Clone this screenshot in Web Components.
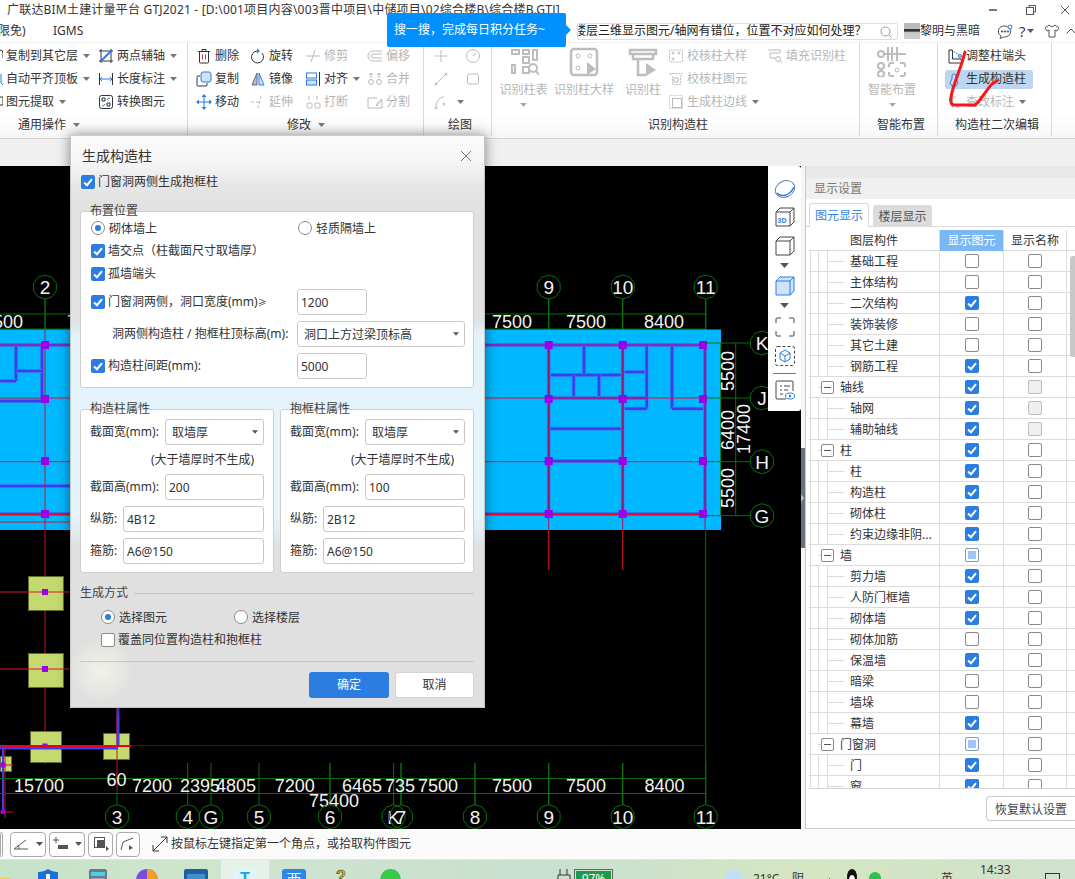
<!DOCTYPE html>
<html lang="zh">
<head>
<meta charset="utf-8">
<title>GTJ2021</title>
<style>
    html, body { margin: 0; padding: 0; background: #f0f0f0; }
    body {
        width: 1075px;
        height: 879px;
        overflow: hidden;
        position: relative;
        font: 12px/16px "Noto Sans", "Noto Sans CJK SC", sans-serif;
        color: #333;
    }
    #shell { display: flex; flex-direction: column; height: 879px; }
    #work { display: flex; height: 663px; }
</style>
</head>
<body>
<div id="shell">
    <title-bar></title-bar>
    <menu-bar></menu-bar>
    <rb-ribbon>
        <rb-group w="188" lpad="18" label="通用操作" caret>
            <rb-col w="111" left="-13">
                <rb-tool icon="frag1" caret>复制到其它层</rb-tool>
                <rb-tool icon="frag2" caret>自动平齐顶板</rb-tool>
                <rb-tool icon="frag3" caret>图元提取</rb-tool>
            </rb-col>
            <rb-col w="90">
                <rb-tool icon="axis" caret>两点辅轴</rb-tool>
                <rb-tool icon="dim" caret>长度标注</rb-tool>
                <rb-tool icon="convert">转换图元</rb-tool>
            </rb-col>
        </rb-group>
        <rb-group w="236" lpad="99" label="修改" caret>
            <rb-col w="54" left="8">
                <rb-tool icon="trash">删除</rb-tool>
                <rb-tool icon="copy">复制</rb-tool>
                <rb-tool icon="move">移动</rb-tool>
            </rb-col>
            <rb-col w="55">
                <rb-tool icon="rotate">旋转</rb-tool>
                <rb-tool icon="mirror">镜像</rb-tool>
                <rb-tool icon="extend" off>延伸</rb-tool>
            </rb-col>
            <rb-col w="62">
                <rb-tool icon="trim" off>修剪</rb-tool>
                <rb-tool icon="align" caret>对齐</rb-tool>
                <rb-tool icon="breakp" off>打断</rb-tool>
            </rb-col>
            <rb-col w="50">
                <rb-tool icon="offset" off>偏移</rb-tool>
                <rb-tool icon="merge" off>合并</rb-tool>
                <rb-tool icon="split" off>分割</rb-tool>
            </rb-col>
        </rb-group>
        <rb-group w="68" lpad="24" label="绘图">
            <rb-col w="32" left="9">
                <rb-tool icon="point" off></rb-tool>
                <rb-tool icon="line" off></rb-tool>
                <rb-tool icon="arc" off caret></rb-tool>
            </rb-col>
            <rb-col w="20">
                <rb-tool icon="circle" off></rb-tool>
                <rb-tool icon="rect" off></rb-tool>
            </rb-col>
        </rb-group>
        <rb-group w="368" lpad="156" label="识别构造柱">
            <rb-big w="53" left="5" icon="bigTable" caret>识别柱表</rb-big>
            <rb-big w="68" icon="bigSample">识别柱大样</rb-big>
            <rb-big w="50" icon="bigColumn">识别柱</rb-big>
            <rb-col w="99">
                <rb-tool icon="chk1" off>校核柱大样</rb-tool>
                <rb-tool icon="chk2" off>校核柱图元</rb-tool>
                <rb-tool icon="edge" off caret>生成柱边线</rb-tool>
            </rb-col>
            <rb-col w="80">
                <rb-tool icon="fill" off>填充识别柱</rb-tool>
            </rb-col>
        </rb-group>
        <rb-group w="78" lpad="17" label="智能布置">
            <rb-big w="48" left="8" icon="bigSmart" caret>智能布置</rb-big>
        </rb-group>
        <rb-group w="114" lpad="17" label="构造柱二次编辑">
            <rb-col w="100" left="9">
                <rb-tool icon="adjust">调整柱端头</rb-tool>
                <rb-tool icon="gen" active>生成构造柱</rb-tool>
                <rb-tool icon="note" off caret>查改标注</rb-tool>
            </rb-col>
        </rb-group>
    </rb-ribbon>
    <tab-strip></tab-strip>
    <div id="work">
        <cad-view></cad-view>
        <split-bar></split-bar>
        <display-panel></display-panel>
    </div>
    <status-bar></status-bar>
    <task-bar></task-bar>
</div>
<search-tip></search-tip>
<ink-mark></ink-mark>
<view-toolbar></view-toolbar>
<cons-dialog></cons-dialog>

<script>
const BLUE = '#2b7de1';
const svg = (w, h, body, vb) => `<svg xmlns="http://www.w3.org/2000/svg" width="${w}" height="${h}" viewBox="${vb || `0 0 ${w} ${h}`}" fill="none" stroke="currentColor" stroke-width="1">${body}</svg>`;

// 16 unit ribbon icons, big ones are 30
const ICONS = {
    frag1: `<path d="M13 2a3 3 0 0 1 3 3v5" stroke="#333"/>`,
    frag2: `<path d="M14 3v9l2 2" stroke="${BLUE}"/>`,
    frag3: `<path d="M13 3h3v8h-3" stroke="#333"/>`,
    axis: `<path d="M3 1v14M1 13h14M13 1v14M1 3h14" stroke="#333"/><path d="M3 13L13 3" stroke="${BLUE}" stroke-width="2"/>`,
    dim: `<path d="M1.500 2v12M14.500 2v12" stroke="#333"/><path d="M2 8h12M4 6L2 8l2 2M12 6l2 2-2 2" stroke="${BLUE}"/>`,
    convert: `<rect x="1.500" y="1.500" width="13" height="13" rx="2" stroke="#333"/><path d="M4 4h3v3H4zM9 9h3v3H9z" stroke="#333"/><path d="M9 6a3 3 0 0 1 3-2M7 10a3 3 0 0 1-3 2" stroke="${BLUE}"/>`,
    trash: `<path d="M2 3.500h12M6 3.500V1.500h4v2M3.500 3.500v10.500a1 1 0 0 0 1 1h7a1 1 0 0 0 1-1V3.500" stroke="#333"/><path d="M6.500 6.500v5M9.500 6.500v5" stroke="#d92b2b"/>`,
    rotate: `<path d="M7 3a6 6 0 1 0 5 2" stroke="#333"/><path d="M7 0.500l3 2.500-3 2.500z" fill="${BLUE}" stroke="none"/>`,
    copy: `<rect x="5" y="1" width="10" height="10" rx="2" fill="#cfe2fa" stroke="${BLUE}"/><path d="M4 5H2a1 1 0 0 0-1 1v8a1 1 0 0 0 1 1h8a1 1 0 0 0 1-1v-2" stroke="#333"/>`,
    mirror: `<path d="M7 2L2 14h5z" fill="#aebfd6" stroke="#667"/><path d="M9 2l5 12H9z" fill="#cfe2fa" stroke="${BLUE}"/>`,
    align: `<rect x="1.500" y="2" width="10" height="5" fill="#fff" stroke="${BLUE}"/><rect x="1.500" y="9" width="10" height="5" fill="#cfe2fa" stroke="${BLUE}"/><path d="M14.500 1v14" stroke="#333"/>`,
    move: `<path d="M8 1v14M1 8h14" stroke="${BLUE}"/><path d="M8 0l2.500 3h-5zM8 16l2.500-3h-5zM0 8l3-2.500v5zM16 8l-3-2.500v5z" fill="${BLUE}" stroke="none"/>`,
    trim: `<path d="M1 8h14M10 2L6 14"/>`,
    extend: `<path d="M1 8h3M6 8h3M11 2L8 14" stroke-dasharray="3 2"/>`,
    offset: `<path d="M15 3H6a5 5 0 0 0 0 10h9M15 6H6a2 2 0 0 0 0 4h9"/>`,
    merge: `<circle cx="4" cy="11" r="2.500"/><circle cx="12" cy="11" r="2.500"/><path d="M4 3v4M12 3v4M2 4l2-2 2 2M10 4l2-2 2 2"/>`,
    breakp: `<rect x="2" y="9" width="5" height="5" rx="1"/><rect x="10" y="9" width="5" height="5" rx="1"/><path d="M4 2v4M12 2v4"/>`,
    split: `<path d="M1 4h9M1 4v10h14V7M9 11l5-6 1 1-5 6z"/>`,
    point: `<path d="M8 2v4M8 10v4M2 8h4M10 8h4"/><circle cx="8" cy="8" r="1" fill="currentColor"/>`,
    circle: `<circle cx="8" cy="8" r="6.500"/><path d="M8 8l3-3"/>`,
    line: `<path d="M3 13L13 3"/><circle cx="3" cy="13" r="1"/><circle cx="13" cy="3" r="1"/>`,
    rect: `<rect x="2.500" y="3" width="11" height="10" rx="2"/>`,
    arc: `<path d="M3 14C3 8 6 3 11 3"/><circle cx="3" cy="14" r="1"/><circle cx="11" cy="10" r="1"/>`,
    chk1: `<rect x="1.500" y="2" width="13" height="12" rx="1" stroke-dasharray="2 1"/><circle cx="5" cy="5" r="1"/><circle cx="11" cy="5" r="1"/><circle cx="5" cy="11" r="1"/>`,
    chk2: `<path d="M1.500 2.500h13l-2 3v8h-8v-8z" stroke-dasharray="2 1"/><path d="M6 7h4v4H6z"/>`,
    edge: `<rect x="1.500" y="1.500" width="13" height="13" stroke-dasharray="1 1"/><rect x="4.500" y="4.500" width="9" height="9"/>`,
    fill: `<path d="M1 2h12v3H3v5h5"/><circle cx="11" cy="11" r="2.500"/><path d="M13 13l2 2"/>`,
    adjust: `<path d="M2 15V2h3.500v9H14l1 4z" stroke="#333"/><path d="M4 2l8 5" stroke="${BLUE}" stroke-dasharray="2 1"/><circle cx="13" cy="8" r="1.500" fill="#cfe2fa" stroke="${BLUE}"/>`,
    gen: `<path d="M5 5a2 2 0 1 1 4 0v3l2 4-2 3H5l-2-3 2-4z" fill="#cfe2fa" stroke="${BLUE}"/>`,
    note: `<path d="M2 3h7M5.500 3v11"/><circle cx="11" cy="12" r="1.500"/>`
};
const BIG = {
    bigTable: `<path d="M3 3h7v4H3zM14 3h6v4h-6zM24 3h4v10h-4zM14 10h6v6h-6zM3 18h3v8H3zM14 20h6v6h-6z" stroke-width="2"/><circle cx="24" cy="21" r="4" stroke-width="2"/><path d="M27 24l3 4" stroke-width="2"/>`,
    bigSample: `<rect x="2" y="2" width="26" height="26" rx="3" stroke-width="2.500"/><circle cx="9" cy="9" r="2"/><circle cx="21" cy="9" r="2"/><circle cx="9" cy="21" r="2"/><path d="M18 15l9 7-9 6z" fill="currentColor" stroke="none"/>`,
    bigColumn: `<path d="M2 3h26v4H2zM5 7v5h20V7M10 12v16h8" stroke-width="2.500"/><path d="M18 16l10 7-10 6z" fill="currentColor" stroke="none"/>`,
    bigSmart: `<path d="M0 7h29M11 0v14M20 0v14M0 18h8M15 0v14" stroke-width="2"/><circle cx="4" cy="7" r="3" fill="#fff" stroke-width="2"/><circle cx="4" cy="19" r="3" fill="#fff" stroke-width="2"/><circle cx="4" cy="27" r="3" fill="#fff" stroke-width="2"/><path d="M14 16h3M23 16h3a2 2 0 0 1 2 2v2M28 25v2a2 2 0 0 1-2 2h-3M17 29h-3a2 2 0 0 1-2-2v-2M12 20v-2a2 2 0 0 1 2-2" stroke-width="2"/><circle cx="20" cy="23" r="2"/>`
};

const CARET = `<svg width="7" height="4" viewBox="0 0 7 4"><path d="M0 0h7L3.500 4z" fill="currentColor"/></svg>`;
const TICK = `<svg width="14" height="14" viewBox="0 0 14 14"><path d="M3 7.500l3 2.700 5-6" fill="none" stroke="#fff" stroke-width="2"/></svg>`;

class TitleBar extends HTMLElement {
    connectedCallback() {
        this.attachShadow({ mode: 'open' }).innerHTML = `
            <style>
                :host { display: flex; align-items: center; height: 21px; background: #fff; padding-left: 7px; position: relative; white-space: nowrap; }
                .t { flex: 1; letter-spacing: .2px; }
                .w { display: flex; align-items: center; color: #555; }
            </style>
            <span class="t">广联达BIM土建计量平台 GTJ2021 - [D:\\001项目内容\\003晋中项目\\中储项目\\02综合楼B\\综合楼B.GTJ]</span>
            <span class="w">
                ${svg(8, 3, '<rect width="8" height="2" fill="#777" stroke="none"/>')}
                <span style="width:29px"></span>
                ${svg(10, 10, '<rect x="0.500" y="2.500" width="7" height="7"/><path d="M3 2V0.500h6.500V7H8"/>')}
                <span style="width:24px"></span>
                ${svg(10, 10, '<path d="M1 1l8 8M9 1l-8 8"/>')}
                <span style="width:5px"></span>
            </span>`;
    }
}

class MenuBar extends HTMLElement {
    connectedCallback() {
        this.attachShadow({ mode: 'open' }).innerHTML = `
            <style>
                :host { display: flex; align-items: center; height: 21px; background: #fff; white-space: nowrap; overflow: hidden; }
                .m { margin-left: -2px; width: 55px; flex: none; }
                .s { margin-left: 492px; width: 319px; height: 15px; border: 1px solid #ddd; border-radius: 2px; box-sizing: content-box; display: flex; align-items: center; flex: none; position: relative; overflow: hidden; }
                .s span { margin-left: -4px; color: #222; }
                .s svg { position: absolute; right: 5px; top: 2px; color: #999; background: #fff; }
                .pic { width: 16px; height: 16px; margin-left: 6px; flex: none; background: linear-gradient(#bbb 0 35%, #333 40% 50%, #ccc 60%); }
                .i { display: flex; align-items: center; color: #555; }
            </style>
            <span class="m">限免)</span>
            <span style="width:32px;flex:none">IGMS</span>
            <div class="s"><span>楼层三维显示图元/轴网有错位，位置不对应如何处理？</span>${svg(12, 12, '<circle cx="5.500" cy="5.500" r="4.500"/><path d="M9 9l2.500 2.500"/>')}</div>
            <div class="pic"></div>
            <span style="width:60px;flex:none">黎明与黑暗</span>
            <div class="i">
                <span style="width:17px"></span>
                ${svg(16, 15, `<path d="M8 2a6.500 5.500 0 0 0-4 10l-1 2.500 3.500-1.500A6.500 5.500 0 1 0 8 2z"/><circle cx="5" cy="7.500" r=".7" fill="currentColor"/><circle cx="8" cy="7.500" r=".7" fill="currentColor"/><circle cx="11" cy="7.500" r=".7" fill="currentColor"/><circle cx="13" cy="3" r="2" fill="#fff" stroke="${BLUE}"/>`)}
                <span style="width:6px"></span>
                <span style="font-size:15px;color:#444">?</span>
                <span style="width:1px"></span>
                ${CARET}
                <span style="width:10px"></span>
                ${svg(16, 14, '<path d="M5 1L1 4l2 3 2-1v7h6V6l2 1 2-3-4-3c-1 2-5 2-6 0z"/>')}
                <span style="width:6px"></span>
                ${svg(10, 6, '<path d="M0.500 5.500L5 1l4.500 4.500"/>')}
            </div>`;
    }
}

class RbRibbon extends HTMLElement {
    connectedCallback() {
        this.attachShadow({ mode: 'open' }).innerHTML = `
            <style>
                :host { display: flex; height: 96px; background: linear-gradient(#fff 76%, #f6f6f6); border-bottom: 1px solid #d4d4d4; overflow: hidden; border-top: 1px solid #f0f0f0; box-sizing: content-box; }
            </style>
            <slot></slot>`;
    }
}

class RbGroup extends HTMLElement {
    connectedCallback() {
        const w = this.getAttribute('w');
        this.attachShadow({ mode: 'open' }).innerHTML = `
            <style>
                :host { display: flex; flex-direction: column; flex: none; width: ${w}px; box-sizing: border-box; border-right: 1px solid #d8d8d8; height: 93px; }
                .body { display: flex; height: 72px; flex: none; padding-top: 2px; box-sizing: border-box; }
                .lab { display: flex; align-items: center; gap: 7px; height: 21px; flex: none; padding-left: ${this.getAttribute('lpad')}px; white-space: nowrap; color: #333; }
                .lab svg { color: #777; }
            </style>
            <div class="body"><slot></slot></div>
            <div class="lab">${this.getAttribute('label')}${this.hasAttribute('caret') ? CARET : ''}</div>`;
    }
}

class RbCol extends HTMLElement {
    connectedCallback() {
        const left = this.getAttribute('left') || 0;
        this.attachShadow({ mode: 'open' }).innerHTML = `
            <style>
                :host { display: flex; flex-direction: column; flex: none; width: ${this.getAttribute('w')}px; margin-left: ${left}px; }
            </style>
            <slot></slot>`;
    }
}

class RbTool extends HTMLElement {
    connectedCallback() {
        const off = this.hasAttribute('off');
        const active = this.hasAttribute('active');
        const caret = this.hasAttribute('caret');
        this.attachShadow({ mode: 'open' }).innerHTML = `
            <style>
                :host { display: flex; align-items: center; height: 23px; white-space: nowrap; color: ${off ? '#b6b6b6' : '#333'}; }
                .ic { width: 16px; height: 16px; margin-right: 3px; flex: none; color: #bbb; }
                .ca { margin-left: 5px; color: #777; display: flex; }
                .hl { display: flex; align-items: center; height: 19px; width: 88px; margin-left: -2px; padding-left: 2px; box-sizing: border-box; border-radius: 3px; background: #bcd6f2; }
                .row { display: flex; align-items: center; }
            </style>
            <div class="${active ? 'hl' : 'row'}">
                <span class="ic">${svg(16, 16, ICONS[this.getAttribute('icon')] || '')}</span>
                <span><slot></slot></span>
                ${caret ? `<span class="ca">${CARET}</span>` : ''}
            </div>`;
    }
}

class RbBig extends HTMLElement {
    connectedCallback() {
        const left = this.getAttribute('left') || 0;
        this.attachShadow({ mode: 'open' }).innerHTML = `
            <style>
                :host { display: flex; flex-direction: column; align-items: center; flex: none; width: ${this.getAttribute('w')}px; margin-left: ${left}px; color: #b6b6b6; white-space: nowrap; padding-top: 2px; }
                .ic { height: 30px; color: #bdbdbd; }
                .tx { margin-top: 5px; line-height: 16px; }
                .ca { margin-top: 5px; display: flex; color: #aaa; }
            </style>
            <div class="ic">${svg(30, 30, BIG[this.getAttribute('icon')] || '')}</div>
            <div class="tx"><slot></slot></div>
            ${this.hasAttribute('caret') ? `<div class="ca">${CARET}</div>` : ''}`;
    }
}

class TabStrip extends HTMLElement {
    connectedCallback() {
        this.attachShadow({ mode: 'open' }).innerHTML = `<style>:host { display: block; height: 27px; background: #f0f0f0; }</style>`;
    }
}

class SearchTip extends HTMLElement {
    connectedCallback() {
        this.attachShadow({ mode: 'open' }).innerHTML = `
            <style>
                :host { position: absolute; left: 387px; top: 13px; width: 179px; height: 34px; background: #0091ff; color: #fff; display: flex; align-items: center; padding-left: 7px; box-sizing: border-box; border-radius: 2px; white-space: nowrap; }
                i { position: absolute; right: -5px; top: 12px; border-left: 5px solid #0091ff; border-top: 5px solid transparent; border-bottom: 5px solid transparent; }
            </style>
            搜一搜，完成每日积分任务~<i></i>`;
    }
}

class InkMark extends HTMLElement {
    connectedCallback() {
        this.attachShadow({ mode: 'open' }).innerHTML = `
            <style>:host { position: absolute; left: 945px; top: 48px; width: 56px; height: 62px; pointer-events: none; }</style>
            <svg width="56" height="62" viewBox="945 48 56 62" fill="none"><path d="M965 52C963 60 961 66 958 74C955 82 952 90 951 97C950 101 951 105 954 105L975 105C980 102 986 90 992 84L997 81" stroke="#f5161c" stroke-width="3" stroke-linecap="round" stroke-linejoin="round"/></svg>`;
    }
}

// drawing area, coordinates below are page coordinates
class CadView extends HTMLElement {
    connectedCallback() {
        const G = '#0a6e0a', R = '#e0102e', B = '#3f3cf0', P = '#9a00ee';
        const line = (x1, y1, x2, y2, c, w = 1) => `<line x1="${x1}" y1="${y1}" x2="${x2}" y2="${y2}" stroke="${c}" stroke-width="${w}"/>`;
        const txt = (x, y, s, size = 18, rot) => `<text x="${x}" y="${y}" font-size="${size}" fill="#f2f2f2" text-anchor="middle"${rot ? ` transform="rotate(-90 ${x} ${y})"` : ''}>${s}</text>`;
        const bubble = (x, y, s) => {
            let pts = [];
            for (let i = 0; i < 10; i++) {
                const a = Math.PI * 2 * i / 10 + Math.PI / 10;
                pts.push((x + 12 * Math.cos(a)).toFixed(1) + ',' + (y + 12 * Math.sin(a)).toFixed(1));
            }
            return `<polygon points="${pts.join(' ')}" fill="none" stroke="${G}"/>` + txt(x, y + 7, s, 19);
        };
        const sq = (x, y, s = 8) => `<rect x="${x - s / 2}" y="${y - s / 2}" width="${s}" height="${s}" fill="${P}"/>`;
        const wall = (x1, y1, x2, y2) => line(x1, y1, x2, y2, '#2a8cf8', 4) + line(x1, y1, x2, y2, B, 2.500);
        const pad = (x, y, w, h) => `<rect x="${x + .5}" y="${y + .5}" width="${w}" height="${h}" fill="#c4da6e" stroke="#5f6f30"/>`;

        let s = '';
        s += line(0, 314, 706, 314, G) + line(0, 329, 706, 329, G);
        [[45, 299, 330], [548.700, 299, 330], [622.700, 299, 330], [705.700, 299, 330]].forEach(a => s += line(a[0], a[1], a[0], a[2], G, 1.500));
        s += `<rect x="0" y="329.500" width="721" height="200.500" fill="#00b8ff"/>`;

        // walls
        [[0, 345, 705, 345], [0, 401, 45, 401], [0, 486, 70, 486], [0, 514, 705, 514], [16, 345, 16, 381], [0, 381, 16, 381], [42, 345, 42, 400], [16, 371, 42, 371],
         [549, 375, 622, 375], [584, 345, 584, 375], [573.700, 375, 573.700, 398], [599, 375, 599, 398], [549, 398, 622, 398], [622, 372, 646.700, 372],
         [646.700, 345, 646.700, 408.700], [622, 408.700, 646.700, 408.700], [672, 345, 672, 408.700], [672, 408.700, 705, 408.700], [549, 428.700, 622, 428.700],
         [549, 461, 622, 461], [548.700, 345, 548.700, 514], [622.700, 345, 622.700, 514], [705, 345, 705, 514], [622, 398, 646, 398]].forEach(a => s += wall(...a));

        // axis lines in red
        s += line(0, 345, 705, 345, '#c0206a') + line(0, 398, 705, 398, R) + line(0, 461.700, 705, 461.700, R) + line(0, 514.500, 705, 514.500, R, 1.500) + line(0, 522, 70, 522, R);
        s += line(45, 329, 45, 764, '#c81228') + line(548.700, 345, 548.700, 570, '#a8184c') + line(622.700, 345, 622.700, 570, '#a8184c') + line(705, 345, 705, 530, '#a8184c');
        s += line(548.700, 530, 548.700, 570, '#b01010') + line(622.700, 530, 622.700, 570, '#b01010') + line(705.700, 530, 705.700, 805, G);

        [45, 548.700, 622.700, 703].forEach(x => [345, 399, 461, 514].forEach(y => s += sq(x, y)));

        s += pad(28, 576, 35, 34) + pad(28, 653, 35, 34) + pad(30, 731, 31, 31) + pad(103, 733, 26, 26) + pad(0, 756, 11, 15);
        s += line(0, 592, 300, 592, R) + line(0, 669, 300, 669, R);
        s += sq(45, 592, 6) + sq(45, 669, 6) + sq(45, 746, 5);

        s += line(118, 708, 118, 746, B, 3) + line(117, 700, 117, 790, '#c81228');
        s += line(0, 748, 118, 748, B, 3) + line(0, 746, 131, 746, '#f00010', 2) + line(131, 745.500, 706, 745.500, '#800000');
        s += line(3, 746, 3, 812, B, 2) + line(5, 746, 5, 818, '#c81228') + line(0, 812, 13, 812, '#c81228') + line(0, 765, 13, 765, '#f00010') + sq(3, 765, 5) + sq(3, 812, 4);

        // dimension lines
        s += line(0, 778.500, 706, 778.500, G) + line(0, 793.500, 706, 793.500, G);
        [187.700, 211, 259, 393.600, 401, 475, 548.700, 622.700, 705.700].forEach(x => s += line(x, 763, x, 805, G, x === 401 || x === 475 || x === 548.700 || x === 622.700 ? 1.500 : 1));
        s += line(330, 763, 330, 805, G, 1.500) + line(117, 790, 117, 805, G);
        [[39, '15700'], [152, '7200'], [200, '2395'], [236, '4805'], [294.700, '7200'], [362, '6465'], [400, '735'], [438, '7500'], [512, '7500'], [586, '7500'], [664.600, '8400']].forEach(a => s += txt(a[0], 792, a[1]));
        s += txt(116.600, 786, '60') + txt(334, 807, '75400');
        [[117, '3'], [187.700, '4'], [211, 'G'], [259, '5'], [330, '6'], [393.600, 'K'], [401, '7'], [475, '8'], [548.700, '9'], [622.700, '10'], [705.700, '11']].forEach(a => s += bubble(a[0], 816.700, a[1]));

        // top axis
        [[45, '2'], [548.700, '9'], [622.700, '10'], [705.700, '11']].forEach(a => s += bubble(a[0], 287, a[1]));
        [[8, '500'], [72, '7'], [512, '7500'], [586, '7500'], [664, '8400']].forEach(a => s += txt(a[0], 328, a[1]));

        // right axis
        [[343, 'K'], [398, 'J'], [461.700, 'H'], [515.700, 'G']].forEach(a => s += line(705, a[0], 750, a[0], G) + bubble(762, a[0], a[1]));
        s += line(720.700, 343, 720.700, 516, G) + line(735.700, 343, 735.700, 516, G);
        s += txt(734, 371, '5500', 18, true) + txt(734, 430, '6400', 18, true) + txt(734, 488, '5500', 18, true) + txt(750, 429, '17400', 18, true);

        this.attachShadow({ mode: 'open' }).innerHTML = `
            <style>
                :host { display: block; flex: none; width: 801px; height: 663px; background: #000; overflow: hidden; }
                svg { display: block; font-family: "Liberation Sans", sans-serif; }
            </style>
            <svg width="801" height="663" viewBox="0 166 801 663">${s}</svg>`;
    }
}

class SplitBar extends HTMLElement {
    connectedCallback() {
        this.attachShadow({ mode: 'open' }).innerHTML = `
            <style>
                :host { display: flex; flex-direction: column; flex: none; width: 4px; background: #f6f6f6; }
                .top { height: 282px; }
                .g { height: 100px; background: #6c747c; color: #ddd; display: flex; align-items: center; }
                i { border-left: 3px solid #c8c8c8; border-top: 4px solid transparent; border-bottom: 4px solid transparent; }
            </style>
            <div class="top"></div><div class="g"><i></i></div>`;
    }
}

class ViewToolbar extends HTMLElement {
    connectedCallback() {
        const c = '#444';
        const cube = (fill, stroke) => svg(20, 20, `<path d="M1 5l4-4h14v14l-4 4H1z" fill="${fill}" stroke="${stroke}"/><path d="M1 5h14v14M15 5l4-4" stroke="${stroke}"/>`);
        this.attachShadow({ mode: 'open' }).innerHTML = `
            <style>
                :host { position: absolute; left: 768px; top: 166px; width: 33px; height: 245px; box-sizing: border-box; background: #fff; border-radius: 0 3px 3px 0; display: flex; flex-direction: column; align-items: center; color: ${c}; padding-top: 12px; }
                .ca { color: #555; display: flex; height: 4px; }
                .ca svg { width: 9px; height: 5px; }
                hr { width: 23px; margin: 0; border: 0; border-top: 1px solid #777; }
                div.i { display: flex; flex: none; position: relative; }
                .d3 { position: absolute; left: 3px; bottom: 2px; font: 700 7px/8px "Liberation Sans", sans-serif; color: ${BLUE}; }
            </style>
            <div class="i">${svg(22, 22, `<ellipse cx="11" cy="11" rx="10" ry="8" transform="rotate(-25 11 11)" stroke="#5a7fb8"/><path d="M3 15c4 4 12 4 17-6" stroke="${BLUE}" stroke-width="1.500"/>`)}</div>
            <div class="i" style="margin-top:7px">${cube('#fff', c)}<span class="d3">3D</span></div>
            <div class="i" style="margin-top:9px">${cube('#fff', c)}</div>
            <div class="ca" style="margin-top:7px">${CARET}</div>
            <div class="i" style="margin-top:9px">${cube('#d0e3fb', BLUE)}</div>
            <div class="ca" style="margin-top:7px">${CARET}</div>
            <div class="i" style="margin-top:10px">${svg(20, 20, '<path d="M1 6V2a1 1 0 0 1 1-1h4M14 1h4a1 1 0 0 1 1 1v4M19 14v4a1 1 0 0 1-1 1h-4M6 19H2a1 1 0 0 1-1-1v-4"/>')}</div>
            <div class="i" style="margin-top:9px">${svg(20, 20, `<rect x="0.500" y="0.500" width="19" height="19" rx="2" stroke-dasharray="3 2"/><path d="M10 4l5 3v6l-5 3-5-3V7zM5 7l5 3 5-3M10 10v6" stroke="${BLUE}"/>`)}</div>
            <hr style="margin-top:7px">
            <div class="i" style="margin-top:6px">${svg(20, 20, `<path d="M18 11V2a1 1 0 0 0-1-1H2a1 1 0 0 0-1 1v16a1 1 0 0 0 1 1h9"/><path d="M5 6h2M9 6h6M5 10h2M9 10h4M5 14h3"/><ellipse cx="15" cy="16" rx="4.500" ry="3" stroke="${BLUE}"/><circle cx="15" cy="16" r="1.200" fill="${BLUE}" stroke="none"/>`)}</div>`;
    }
}

class DlgCheck extends HTMLElement {
    connectedCallback() {
        const on = this.hasAttribute('on');
        this.attachShadow({ mode: 'open' }).innerHTML = `
            <style>
                :host { display: flex; align-items: center; gap: 3px; height: 14px; white-space: nowrap; }
                .b { width: 14px; height: 14px; box-sizing: border-box; border-radius: 2px; flex: none; background: ${on ? BLUE : '#fff'}; ${on ? '' : 'border: 1px solid #8a8a8a;'} }
                .b svg { display: block; }
            </style>
            <span class="b">${on ? TICK : ''}</span><span><slot></slot></span>`;
    }
}

class DlgRadio extends HTMLElement {
    connectedCallback() {
        const on = this.hasAttribute('on');
        this.attachShadow({ mode: 'open' }).innerHTML = `
            <style>
                :host { display: flex; align-items: center; gap: 4px; height: 14px; white-space: nowrap; }
                .b { width: 14px; height: 14px; box-sizing: border-box; border-radius: 50%; flex: none; background: #fff; border: 1px solid #8a8a8a; display: flex; align-items: center; justify-content: center; }
                .b i { width: 6px; height: 6px; border-radius: 50%; background: ${on ? BLUE : 'transparent'}; }
                .t { padding-top: 1px; }
            </style>
            <span class="b"><i></i></span><span class="t"><slot></slot></span>`;
    }
}

class DlgField extends HTMLElement {
    connectedCallback() {
        const sel = this.hasAttribute('select');
        this.attachShadow({ mode: 'open' }).innerHTML = `
            <style>
                :host { display: flex; align-items: center; height: 26px; box-sizing: border-box; border: 1px solid #c8c8c8; border-radius: 3px; background: #fff; padding-left: ${sel ? 6 : 3}px; white-space: nowrap; color: #333; }
                span { flex: 1; padding-top: 1px; }
                svg { margin-right: 5px; color: #555; width: 6px; }
            </style>
            <span><slot></slot></span>${sel ? CARET : ''}`;
    }
}

class DlgBox extends HTMLElement {
    connectedCallback() {
        this.attachShadow({ mode: 'open' }).innerHTML = `
            <style>
                :host { display: block; position: relative; box-sizing: border-box; background: #fff; border: 1px solid #cfcfcf; border-radius: 3px; }
                .lg { position: absolute; left: 9px; top: -9px; white-space: nowrap; color: #444; }
            </style>
            <div class="lg">${this.getAttribute('legend')}</div><slot></slot>`;
    }
}

class ConsDialog extends HTMLElement {
    connectedCallback() {
        const props = (t, v1, v2, v3) => `
            <dlg-box class="prop" legend="${t}">
                <div class="fr"><span style="width:75px">截面宽(mm):</span><dlg-field select>取墙厚</dlg-field></div>
                <div class="note">(大于墙厚时不生成)</div>
                <div class="fr"><span style="width:75px">截面高(mm):</span><dlg-field>${v1}</dlg-field></div>
                <div class="fr g"><span style="width:33px">纵筋:</span><dlg-field>${v2}</dlg-field></div>
                <div class="fr g"><span style="width:33px">箍筋:</span><dlg-field>${v3}</dlg-field></div>
            </dlg-box>`;
        this.attachShadow({ mode: 'open' }).innerHTML = `
            <style>
                :host {
                    position: absolute; left: 70px; top: 135px; width: 415px; height: 573px; box-sizing: border-box;
                    padding: 0 10px 0 9px; color: #333; white-space: nowrap;
                    border: 1px solid #c4c4c4; border-top-color: #ccc;
                    box-shadow: 0 0 12px rgba(0,0,0,.45);
                    background:
                        radial-gradient(circle at 30px 534px, #f2f2e8 0, rgba(240,240,232,0) 32px),
                        linear-gradient(#fbfbfb 0, #f6f6f6 25px, #e6e6e6 50px, #e1e1e1 70px, #e1e1e1 185px, #e4f2fb 200px, #e4f3fc 380px, #e1e8ee 400px, #e0e0e0 410px);
                }
                .head { display: flex; align-items: center; justify-content: space-between; height: 39px; padding: 0 2px; }
                .head b { font-weight: 400; font-size: 14px; line-height: 20px; }
                .head svg { color: #777; }
                .pos { margin-top: 22px; height: 177px; padding: 9px 8px 0 10px; }
                .pos .r { display: grid; grid-template-columns: 206px 1fr; align-items: center; }
                .r14 { margin-top: 9px; }
                .r26 { margin-top: 6px; height: 26px; }
                .w70 { width: 70px; }
                .ge { font-size: 9px; }
                .props { display: flex; gap: 6px; margin-top: 21px; }
                .prop { width: 194px; height: 164px; padding: 9px 9px 0 9px; }
                .prop:last-child { padding-right: 8px; }
                .fr { display: flex; align-items: center; height: 26px; }
                .fr dlg-field { flex: 1; }
                .fr.g { margin-top: 6px; }
                .note { height: 29px; line-height: 30px; padding-left: 61px; }
                .way { display: flex; align-items: center; gap: 6px; margin-top: 11px; height: 18px; color: #444; }
                .way i { flex: 1; border-top: 1px solid #c4c4c4; }
                .opt { display: grid; grid-template-columns: 133px 1fr; padding-left: 21px; margin-top: 8px; }
                .hr { border-top: 1px solid #c8c8c8; margin-top: 14px; }
                .btns { display: flex; justify-content: flex-end; gap: 6px; margin-top: 10px; }
                .btn { height: 26px; line-height: 26px; text-align: center; border-radius: 3px; box-sizing: border-box; }
                .ok { width: 80px; background: ${BLUE}; color: #fff; }
                .no { width: 79px; background: #fff; border: 1px solid #d4d4d4; line-height: 24px; }
            </style>
            <div class="head"><b>生成构造柱</b>${svg(12, 12, '<path d="M1 1l10 10M11 1L1 11"/>')}</div>
            <dlg-check on style="margin-left:1px">门窗洞两侧生成抱框柱</dlg-check>
            <dlg-box class="pos" legend="布置位置">
                <div class="r"><dlg-radio on>砌体墙上</dlg-radio><dlg-radio style="margin-left:1px">轻质隔墙上</dlg-radio></div>
                <dlg-check on class="r14">墙交点（柱截面尺寸取墙厚）</dlg-check>
                <dlg-check on class="r14">孤墙端头</dlg-check>
                <div class="r" style="margin-top:8px"><dlg-check on>门窗洞两侧，洞口宽度(mm)<span class="ge">≥</span></dlg-check><dlg-field class="w70">1200</dlg-field></div>
                <div class="r r26"><span style="padding-left:21px">洞两侧构造柱 / 抱框柱顶标高(m):</span><dlg-field select>洞口上方过梁顶标高</dlg-field></div>
                <div class="r r26"><dlg-check on>构造柱间距(mm):</dlg-check><dlg-field class="w70">5000</dlg-field></div>
            </dlg-box>
            <div class="props">
                ${props('构造柱属性', '200', '4B12', 'A6@150')}
                ${props('抱框柱属性', '100', '2B12', 'A6@150')}
            </div>
            <div class="way">生成方式<i></i></div>
            <div class="opt"><dlg-radio on>选择图元</dlg-radio><dlg-radio>选择楼层</dlg-radio></div>
            <dlg-check class="r14" style="padding-left:21px">覆盖同位置构造柱和抱框柱</dlg-check>
            <div class="hr"></div>
            <div class="btns"><div class="btn ok">确定</div><div class="btn no">取消</div></div>`;
    }
}

class TreeRow extends HTMLElement {
    connectedCallback() {
        const parent = this.hasAttribute('parent');
        const box = (state) => {
            if (state === 'on') return `<span class="c on">${TICK}</span>`;
            if (state === 'part') return `<span class="c part"><i></i></span>`;
            if (state === 'dis') return `<span class="c dis"></span>`;
            return `<span class="c"></span>`;
        };
        this.attachShadow({ mode: 'open' }).innerHTML = `
            <style>
                :host { display: grid; grid-template-columns: 131px 64px 63px; height: 21px; box-sizing: border-box; border-bottom: 1px solid #dcdcdc; color: #333; white-space: nowrap; }
                div { display: flex; align-items: center; justify-content: center; border-right: 1px solid #dcdcdc; min-width: 0; }
                .l { padding-top: 2px; }
                .n {
                    justify-content: flex-start; padding-left: ${parent ? 12 : 41}px;
                    background:
                        linear-gradient(#dcdcdc, #dcdcdc) 1px 0 / 1px 100% no-repeat,
                        linear-gradient(#dcdcdc, #dcdcdc) 9px 0 / 1px ${parent ? '0' : '100%'} no-repeat,
                        linear-gradient(#dcdcdc, #dcdcdc) 18px 0 / 1px ${parent ? '0' : '100%'} no-repeat,
                        linear-gradient(#dcdcdc, #dcdcdc) 18px 10px / 17px ${parent ? '0' : '1px'} no-repeat,
                        linear-gradient(#dcdcdc, #dcdcdc) 9px 10px / 4px ${parent ? '1px' : '0'} no-repeat;
                }
                .m { width: 13px; height: 13px; box-sizing: border-box; border: 1px solid #8a8a8a; border-radius: 2px; background: #fff; display: flex; align-items: center; justify-content: center; margin-right: 6px; flex: none; }
                .m i { width: 7px; height: 1px; background: #555; }
                .c { width: 14px; height: 14px; box-sizing: border-box; border: 1px solid #8a8a8a; border-radius: 2px; background: #fff; display: block; }
                .c.on { background: ${BLUE}; border: 0; }
                .c.on svg { display: block; }
                .c.dis { background: #efefef; border-color: #bdbdbd; }
                .c.part { padding: 2px; border-color: #7d9cc8; }
                .c.part i { display: block; width: 8px; height: 8px; background: #9cc6fa; }
            </style>
            <div class="n">${parent ? '<span class="m"><i></i></span>' : ''}<span class="l">${this.getAttribute('label')}</span></div>
            <div>${box(this.getAttribute('show'))}</div>
            <div>${box(this.getAttribute('name'))}</div>`;
    }
}

class DisplayPanel extends HTMLElement {
    connectedCallback() {
        const rows = [
            ['基础工程'], ['主体结构'], ['二次结构', 'on'], ['装饰装修'], ['其它土建'], ['钢筋工程', 'on'],
            ['轴线', 'on', 'dis', 1], ['轴网', 'on', 'dis'], ['辅助轴线', 'on', 'dis'],
            ['柱', 'on', '', 1], ['柱', 'on'], ['构造柱', 'on'], ['砌体柱', 'on'], ['约束边缘非阴...', 'on'],
            ['墙', 'part', '', 1], ['剪力墙', 'on'], ['人防门框墙', 'on'], ['砌体墙', 'on'], ['砌体加筋'], ['保温墙', 'on'], ['暗梁'], ['墙垛'], ['幕墙', 'on'],
            ['门窗洞', 'part', '', 1], ['门', 'on'], ['窗', 'on']
        ].map(r => `<tree-row label="${r[0]}" show="${r[1] || ''}" name="${r[2] || ''}"${r[3] ? ' parent' : ''}></tree-row>`).join('');
        this.attachShadow({ mode: 'open' }).innerHTML = `
            <style>
                :host { display: flex; flex-direction: column; flex: none; width: 270px; height: 663px; box-sizing: border-box; background: #fff; border-left: 1px solid #c8c8c8; border-bottom: 1px solid #c8c8c8; position: relative; overflow: hidden; }
                .strip { height: 12px; background: #e8e8e8; flex: none; }
                .hd { height: 21px; line-height: 22px; background: #f0f0f0; padding-left: 8px; color: #777; flex: none; font-size: 12px; }
                .tabs { display: flex; gap: 4px; height: 28px; padding: 4px 0 0 3px; box-sizing: border-box; border-bottom: 1px solid #d8d8d8; flex: none; }
                .tab { width: 60px; height: 24px; line-height: 24px; text-align: center; box-sizing: border-box; border-radius: 3px 3px 0 0; }
                .tab.on { color: #2f86e8; border: 1px solid #d8d8d8; border-bottom: 0; background: #fff; height: 24px; margin-bottom: -1px; line-height: 23px; }
                .tab.off { background: #dcdcdc; color: #555; height: 22px; margin-top: 2px; line-height: 23px; width: 59px; }
                .tb { margin: 3px 0 0 3px; width: 266px; height: 559px; overflow: hidden; flex: none; border-bottom: 1px solid #d4d4d4; box-sizing: border-box; }
                .th { display: grid; grid-template-columns: 131px 64px 63px; height: 21px; line-height: 21px; text-align: center; border-bottom: 1px solid #dcdcdc; box-sizing: border-box; }
                .th span { border-right: 1px solid #dcdcdc; }
                .th .a { background: #7ab8f5; color: #fff; }
                .sb { position: absolute; right: 0; top: 90px; width: 5px; height: 101px; background: #c8c8c8; border-radius: 3px 0 0 3px; }
                .ft { display: flex; justify-content: flex-end; padding-top: 7px; }
                .rs { width: 89px; height: 25px; line-height: 25px; text-align: center; box-sizing: border-box; border: 1px solid #c8c8c8; border-right: 0; border-radius: 4px 0 0 4px; color: #444; }
            </style>
            <div class="strip"></div>
            <div class="hd">显示设置</div>
            <div class="tabs"><div class="tab on">图元显示</div><div class="tab off">楼层显示</div></div>
            <div class="tb">
                <div class="th"><span>图层构件</span><span class="a">显示图元</span><span>显示名称</span></div>
                ${rows}
            </div>
            <div class="sb"></div>
            <div class="ft"><div class="rs">恢复默认设置</div></div>`;
    }
}

class StatusBar extends HTMLElement {
    connectedCallback() {
        const c = '#555';
        const btn = (w, ml, inner) => `<span class="b" style="width:${w}px;margin-left:${ml}px">${inner}</span>`;
        this.attachShadow({ mode: 'open' }).innerHTML = `
            <style>
                :host { display: flex; align-items: center; height: 30px; background: #fbfbfb; white-space: nowrap; overflow: hidden; color: ${c}; }
                .b { height: 25px; box-sizing: border-box; border: 1px solid #aaa; border-radius: 4px; display: flex; align-items: center; justify-content: center; gap: 5px; flex: none; background: #fff; }
                .t { color: #333; margin-left: 3px; }
            </style>
            ${btn(3, 0, '')}
            ${btn(36, 7, svg(18, 14, '<path d="M1 12L13 3M1 12h14M6 12a6 6 0 0 0-1-4"/>') + CARET)}
            ${btn(36, 3, svg(18, 14, '<path d="M1 3h6M4 0v6" /><rect x="6" y="8" width="10" height="4" fill="currentColor" stroke="none"/>') + CARET)}
            ${btn(25, 3, svg(16, 16, '<rect x="1.500" y="1.500" width="10" height="10"/><rect x="4" y="4" width="8" height="8" fill="currentColor" stroke="none"/><path d="M13 10l3 3-3 2z" fill="currentColor" stroke="none"/>'))}
            ${btn(24, 3, svg(16, 16, '<path d="M1 14l2-8 10-4"/><path d="M9 9l4 3-4 2z" fill="currentColor" stroke="none"/>'))}
            <span style="width:12px"></span>
            ${svg(16, 16, '<path d="M1 15L15 1M9 1h6v6M1 9v6h6" stroke="#333"/>')}
            <span class="t">按鼠标左键指定第一个角点，或拾取构件图元</span>`;
    }
}

class TaskBar extends HTMLElement {
    connectedCallback() {
        const items = [
            [0, 10, 9, `<span style="display:block;width:10px;height:14px;background:#f5c84a"></span>`],
            [38, 20, 0, svg(20, 20, '<path d="M10 0c3 2 6 3 10 3v8c0 5-4 8-10 9-6-1-10-4-10-9V3c4 0 7-1 10-3z" fill="#1a6fe0" stroke="none"/><rect x="8" y="5" width="4" height="10" fill="#fff" stroke="none"/>')],
            [89, 18, 0, svg(18, 20, '<rect width="18" height="20" rx="2" fill="#6b7a88" stroke="none"/><rect x="2" y="3" width="14" height="4" fill="#45d0f0" stroke="none"/><path d="M2 10h14M2 14h14" stroke="#ccd"/>')],
            [136, 22, 0, svg(22, 20, '<circle cx="11" cy="11" r="11" fill="#7a4ce0" stroke="none"/><path d="M11 11V0a11 11 0 0 1 11 11z" fill="#f0a020" stroke="none"/><path d="M11 11h11a11 11 0 0 1-11 11z" fill="#e8402c" stroke="none"/><path d="M11 11v11A11 11 0 0 1 0 11z" fill="#3aa0f0" stroke="none"/>')],
            [184, 24, 0, svg(24, 20, '<rect width="24" height="20" rx="2" fill="#1f5f9f" stroke="none"/><rect x="3" y="5" width="18" height="12" fill="#3f8fd0" stroke="none"/>')],
            [234, 22, 0, `<span style="display:block;width:22px;text-align:center;background:#dff4fb;color:#10a8d8;font:700 16px/20px 'Liberation Sans',sans-serif;height:20px">T</span>`],
            [282, 24, 0, `<span style="display:block;width:24px;height:20px;background:#2b86e8;color:#fff;border-radius:3px;text-align:center;font-size:15px;line-height:20px">西</span>`],
            [336, 15, -2, `<span style="display:block;color:#d8c000;font:700 16px/20px 'Liberation Sans',sans-serif;-webkit-text-stroke:.5px #222">?</span>`],
            [380, 21, 0, svg(21, 20, '<ellipse cx="10.500" cy="11" rx="10.500" ry="11" fill="#3cc84a" stroke="none"/>')],
            [557, 14, 0, svg(14, 20, '<path d="M3 0v6M10 0v6M1 6h12v14H1z"/>')],
            [574, 39, 0, `<span style="display:block;border:1px solid #666;border-bottom:0;height:20px;box-sizing:border-box;padding:1px"><span style="display:block;background:#1d9a4a;color:#fff;height:18px;line-height:16px;text-align:center">97%</span></span>`],
            [724, 19, 0, svg(19, 20, '<ellipse cx="9.500" cy="11" rx="9.500" ry="10" fill="#bfe0f8" stroke="none"/>')],
            [753, 31, 2, `<span style="color:#333">21°C</span>`],
            [792, 13, 2, `<span style="color:#333">阴</span>`],
            [825, 9, 9, svg(9, 5, '<path d="M0.500 4.500L4.500 0.500 8.500 4.500" stroke="#333"/>')],
            [847, 10, 0, svg(10, 20, '<ellipse cx="5" cy="8" rx="5" ry="8" fill="#111" stroke="none"/><ellipse cx="5" cy="11" rx="3" ry="5" fill="#fff" stroke="none"/>')],
            [869, 12, 3, svg(12, 20, '<circle cx="6" cy="6" r="6" fill="#30c050" stroke="none"/>')],
            [900, 10, 11, svg(10, 9, '<path d="M1 9a8 8 0 0 1 8-8M4 9a5 5 0 0 1 5-5" stroke="#333"/>')],
            [917, 15, 10, svg(15, 10, '<path d="M1 4h3l4-3v10L4 8H1zM10 3a4 4 0 0 1 0 5M12 1a7 7 0 0 1 0 9" stroke="#333"/>')],
            [941, 14, 2, `<span style="color:#333">英</span>`],
            [980, 32, -7, `<span style="color:#333;font-size:12px">14:33</span>`],
            [1045, 15, 4, svg(15, 14, '<rect x=".5" y=".5" width="14" height="14" stroke="#333"/>')]
        ];
        let last = 0;
        const html = items.map(i => {
            const ml = i[0] - last;
            last = i[0] + i[1];
            return `<span class="i" style="margin-left:${ml}px;width:${i[1]}px;margin-top:${i[2] + 9}px">${i[3]}</span>`;
        }).join('');
        this.attachShadow({ mode: 'open' }).innerHTML = `
            <style>
                :host { display: flex; align-items: flex-start; height: 20px; overflow: hidden; white-space: nowrap; background: linear-gradient(90deg, #c6e2c8, #cfe6cc 20.5%, #e6f1ea 20.6%, #e6f1ea 25%, #cfe4cf 25.1%, #c8e0d0 50%, #d4e6c2 75%, #cfe2cc); border-top: 1px solid #d8ead8; box-sizing: border-box; position: relative; }
                .i { display: block; flex: none; line-height: 16px; }
                .i svg { display: block; }
            </style>${html}`;
    }
}

customElements.define('title-bar', TitleBar);
customElements.define('menu-bar', MenuBar);
customElements.define('rb-ribbon', RbRibbon);
customElements.define('rb-group', RbGroup);
customElements.define('rb-col', RbCol);
customElements.define('rb-tool', RbTool);
customElements.define('rb-big', RbBig);
customElements.define('tab-strip', TabStrip);
customElements.define('search-tip', SearchTip);
customElements.define('ink-mark', InkMark);
customElements.define('cad-view', CadView);
customElements.define('split-bar', SplitBar);
customElements.define('view-toolbar', ViewToolbar);
customElements.define('dlg-check', DlgCheck);
customElements.define('dlg-radio', DlgRadio);
customElements.define('dlg-field', DlgField);
customElements.define('dlg-box', DlgBox);
customElements.define('cons-dialog', ConsDialog);
customElements.define('tree-row', TreeRow);
customElements.define('display-panel', DisplayPanel);
customElements.define('status-bar', StatusBar);
customElements.define('task-bar', TaskBar);
</script>
</body>
</html>
